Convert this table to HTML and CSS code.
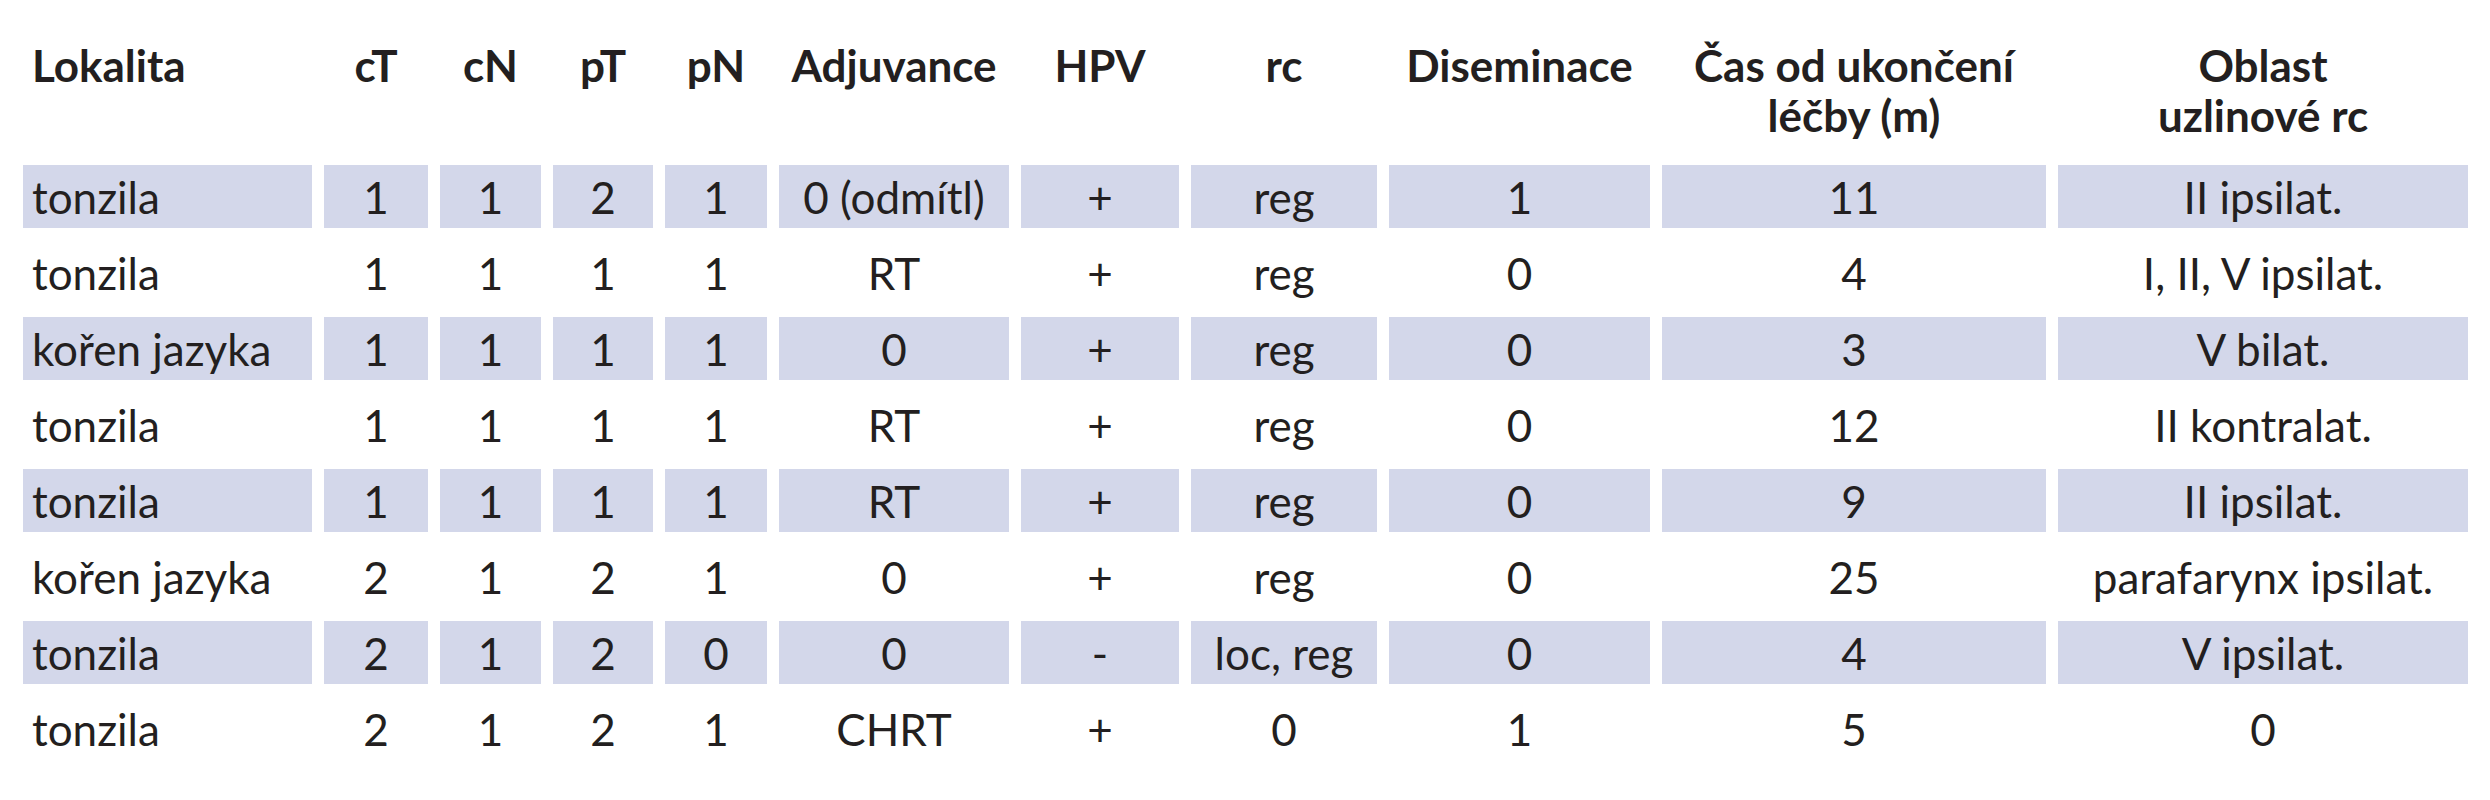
FILE: index.html
```html
<!DOCTYPE html>
<html lang="cs">
<head>
<meta charset="utf-8">
<title>Tabulka</title>
<link rel="stylesheet" href="styles.css">
</head>
<body>
<table class="data">
  <colgroup>
    <col class="c-lok">
    <col class="c-ct">
    <col class="c-cn">
    <col class="c-pt">
    <col class="c-pn">
    <col class="c-adj">
    <col class="c-hpv">
    <col class="c-rc">
    <col class="c-dis">
    <col class="c-cas">
    <col class="c-obl">
  </colgroup>
  <thead>
    <tr>
      <th class="first">Lokalita</th>
      <th>cT</th>
      <th>cN</th>
      <th>pT</th>
      <th>pN</th>
      <th>Adjuvance</th>
      <th>HPV</th>
      <th>rc</th>
      <th>Diseminace</th>
      <th>Čas od ukončení<br>léčby (m)</th>
      <th>Oblast<br>uzlinové rc</th>
    </tr>
  </thead>
  <tbody>
    <tr class="shaded">
      <td class="first">tonzila</td><td>1</td><td>1</td><td>2</td><td>1</td><td>0 (odmítl)</td><td>+</td><td>reg</td><td>1</td><td>11</td><td>II ipsilat.</td>
    </tr>
    <tr>
      <td class="first">tonzila</td><td>1</td><td>1</td><td>1</td><td>1</td><td>RT</td><td>+</td><td>reg</td><td>0</td><td>4</td><td>I, II, V ipsilat.</td>
    </tr>
    <tr class="shaded">
      <td class="first">kořen jazyka</td><td>1</td><td>1</td><td>1</td><td>1</td><td>0</td><td>+</td><td>reg</td><td>0</td><td>3</td><td>V bilat.</td>
    </tr>
    <tr>
      <td class="first">tonzila</td><td>1</td><td>1</td><td>1</td><td>1</td><td>RT</td><td>+</td><td>reg</td><td>0</td><td>12</td><td>II kontralat.</td>
    </tr>
    <tr class="shaded">
      <td class="first">tonzila</td><td>1</td><td>1</td><td>1</td><td>1</td><td>RT</td><td>+</td><td>reg</td><td>0</td><td>9</td><td>II ipsilat.</td>
    </tr>
    <tr>
      <td class="first">kořen jazyka</td><td>2</td><td>1</td><td>2</td><td>1</td><td>0</td><td>+</td><td>reg</td><td>0</td><td>25</td><td>parafarynx ipsilat.</td>
    </tr>
    <tr class="shaded">
      <td class="first">tonzila</td><td>2</td><td>1</td><td>2</td><td>0</td><td>0</td><td>-</td><td>loc, reg</td><td>0</td><td>4</td><td>V ipsilat.</td>
    </tr>
    <tr>
      <td class="first">tonzila</td><td>2</td><td>1</td><td>2</td><td>1</td><td>CHRT</td><td>+</td><td>0</td><td>1</td><td>5</td><td>0</td>
    </tr>
  </tbody>
</table>
</body>
</html>
```

FILE: styles.css
```css
html, body {
  margin: 0;
  padding: 0;
  background: #ffffff;
}

body {
  font-family: Lato, "Open Sans", "Noto Sans", sans-serif;
  font-size: 44px;
  color: #231f20;
}

.data {
  table-layout: fixed;
  width: 2469px;
  border-collapse: separate;
  border-spacing: 12px 13px;
  margin: 27px 0 0 11px;
}

.c-lok { width: 289px; }
.c-ct { width: 104px; }
.c-cn { width: 101px; }
.c-pt { width: 100px; }
.c-pn { width: 102px; }
.c-adj { width: 230px; }
.c-hpv { width: 158px; }
.c-rc { width: 186px; }
.c-dis { width: 261px; }
.c-cas { width: 384px; }
.c-obl { width: 410px; }

.data th {
  font-weight: 700;
  text-align: center;
  vertical-align: top;
  padding: 0;
  height: 112px;
  line-height: 50px;
  white-space: nowrap;
}

.data td {
  text-align: center;
  vertical-align: middle;
  padding: 0;
  height: 63px;
  white-space: nowrap;
}

.data .first {
  text-align: left;
  text-indent: 9px;
}

.shaded td {
  background: #d3d7ea;
}
```
